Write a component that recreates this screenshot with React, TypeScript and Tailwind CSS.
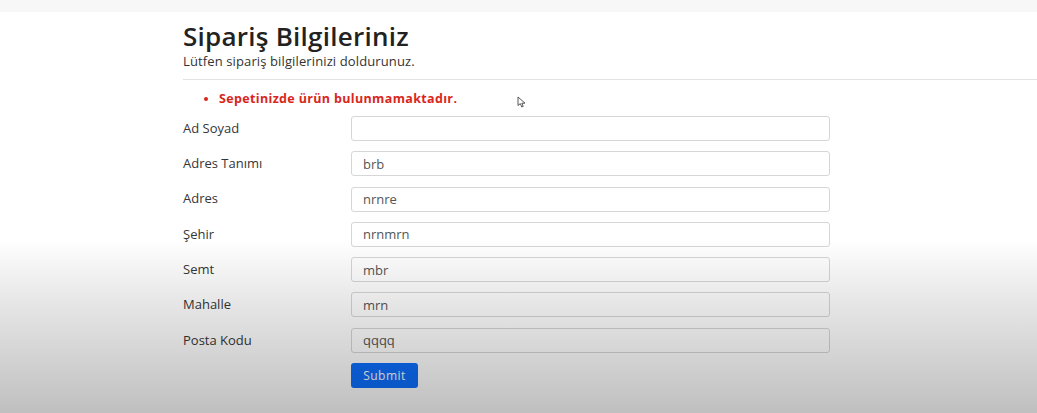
import React from "react";

const rows: { label: string; value: string }[] = [
  { label: "Ad Soyad", value: "" },
  { label: "Adres Tanımı", value: "brb" },
  { label: "Adres", value: "nrnre" },
  { label: "Şehir", value: "nrnmrn" },
  { label: "Semt", value: "mbr" },
  { label: "Mahalle", value: "mrn" },
  { label: "Posta Kodu", value: "qqqq" },
];

export default function App() {
  return (
    <div className="relative min-h-[413px] overflow-hidden bg-white font-['Open_Sans','Noto_Sans',sans-serif]">
      <div className="h-[12px] bg-[#f7f7f7]" />
      <div className="pl-[183px]">
        <h1 className="mt-[9px] text-[26px] font-semibold leading-[31px] tracking-[0.25px] text-[#222]">
          Sipariş Bilgileriniz
        </h1>
        <p className="text-[13px] leading-[18px] tracking-[0.12px] text-[#333]">
          Lütfen sipariş bilgilerinizi doldurunuz.
        </p>
        <div className="mt-[9px] border-t border-[#e3e3e3]" />
        <ul className="mt-[10px] list-disc pl-[36px] text-[12.5px] font-bold leading-[18px] tracking-[0.35px] text-[#d9261c] marker:text-[#d9261c]">
          <li>Sepetinizde ürün bulunmamaktadır.</li>
        </ul>
        <form className="mt-[8px] grid grid-cols-[168px_479px] gap-y-[10.3px]">
          {rows.map((r) => (
            <React.Fragment key={r.label}>
              <label className="flex items-center text-[13px] text-[#363636]">{r.label}</label>
              <input
                readOnly
                value={r.value}
                className="h-[25px] rounded-[3px] border border-[#d6d6d6] bg-transparent px-[11px] text-[13px] text-[#555] outline-none"
              />
            </React.Fragment>
          ))}
          <div />
          <div className="flex">
            <button
              type="button"
              className="block h-[25px] w-[67px] rounded-[3px] bg-[#0d6efd] text-[12px] tracking-[0.5px] text-white"
            >
              Submit
            </button>
          </div>
        </form>
      </div>
      <svg
        className="absolute left-[517px] top-[96px]"
        width="10"
        height="13"
        viewBox="0 0 10 13"
      >
        <path d="M1 1 L1 9.5 L3.3 7.6 L4.8 11 L6.2 10.4 L4.8 7.2 L8 7.2 Z" fill="#fff" stroke="#444" strokeWidth="0.9" />
      </svg>
      <div className="pointer-events-none absolute inset-0 bg-[linear-gradient(to_bottom,rgba(0,0,0,0)_58%,rgba(0,0,0,0.09)_72%,rgba(0,0,0,0.25)_100%)]" />
    </div>
  );
}
